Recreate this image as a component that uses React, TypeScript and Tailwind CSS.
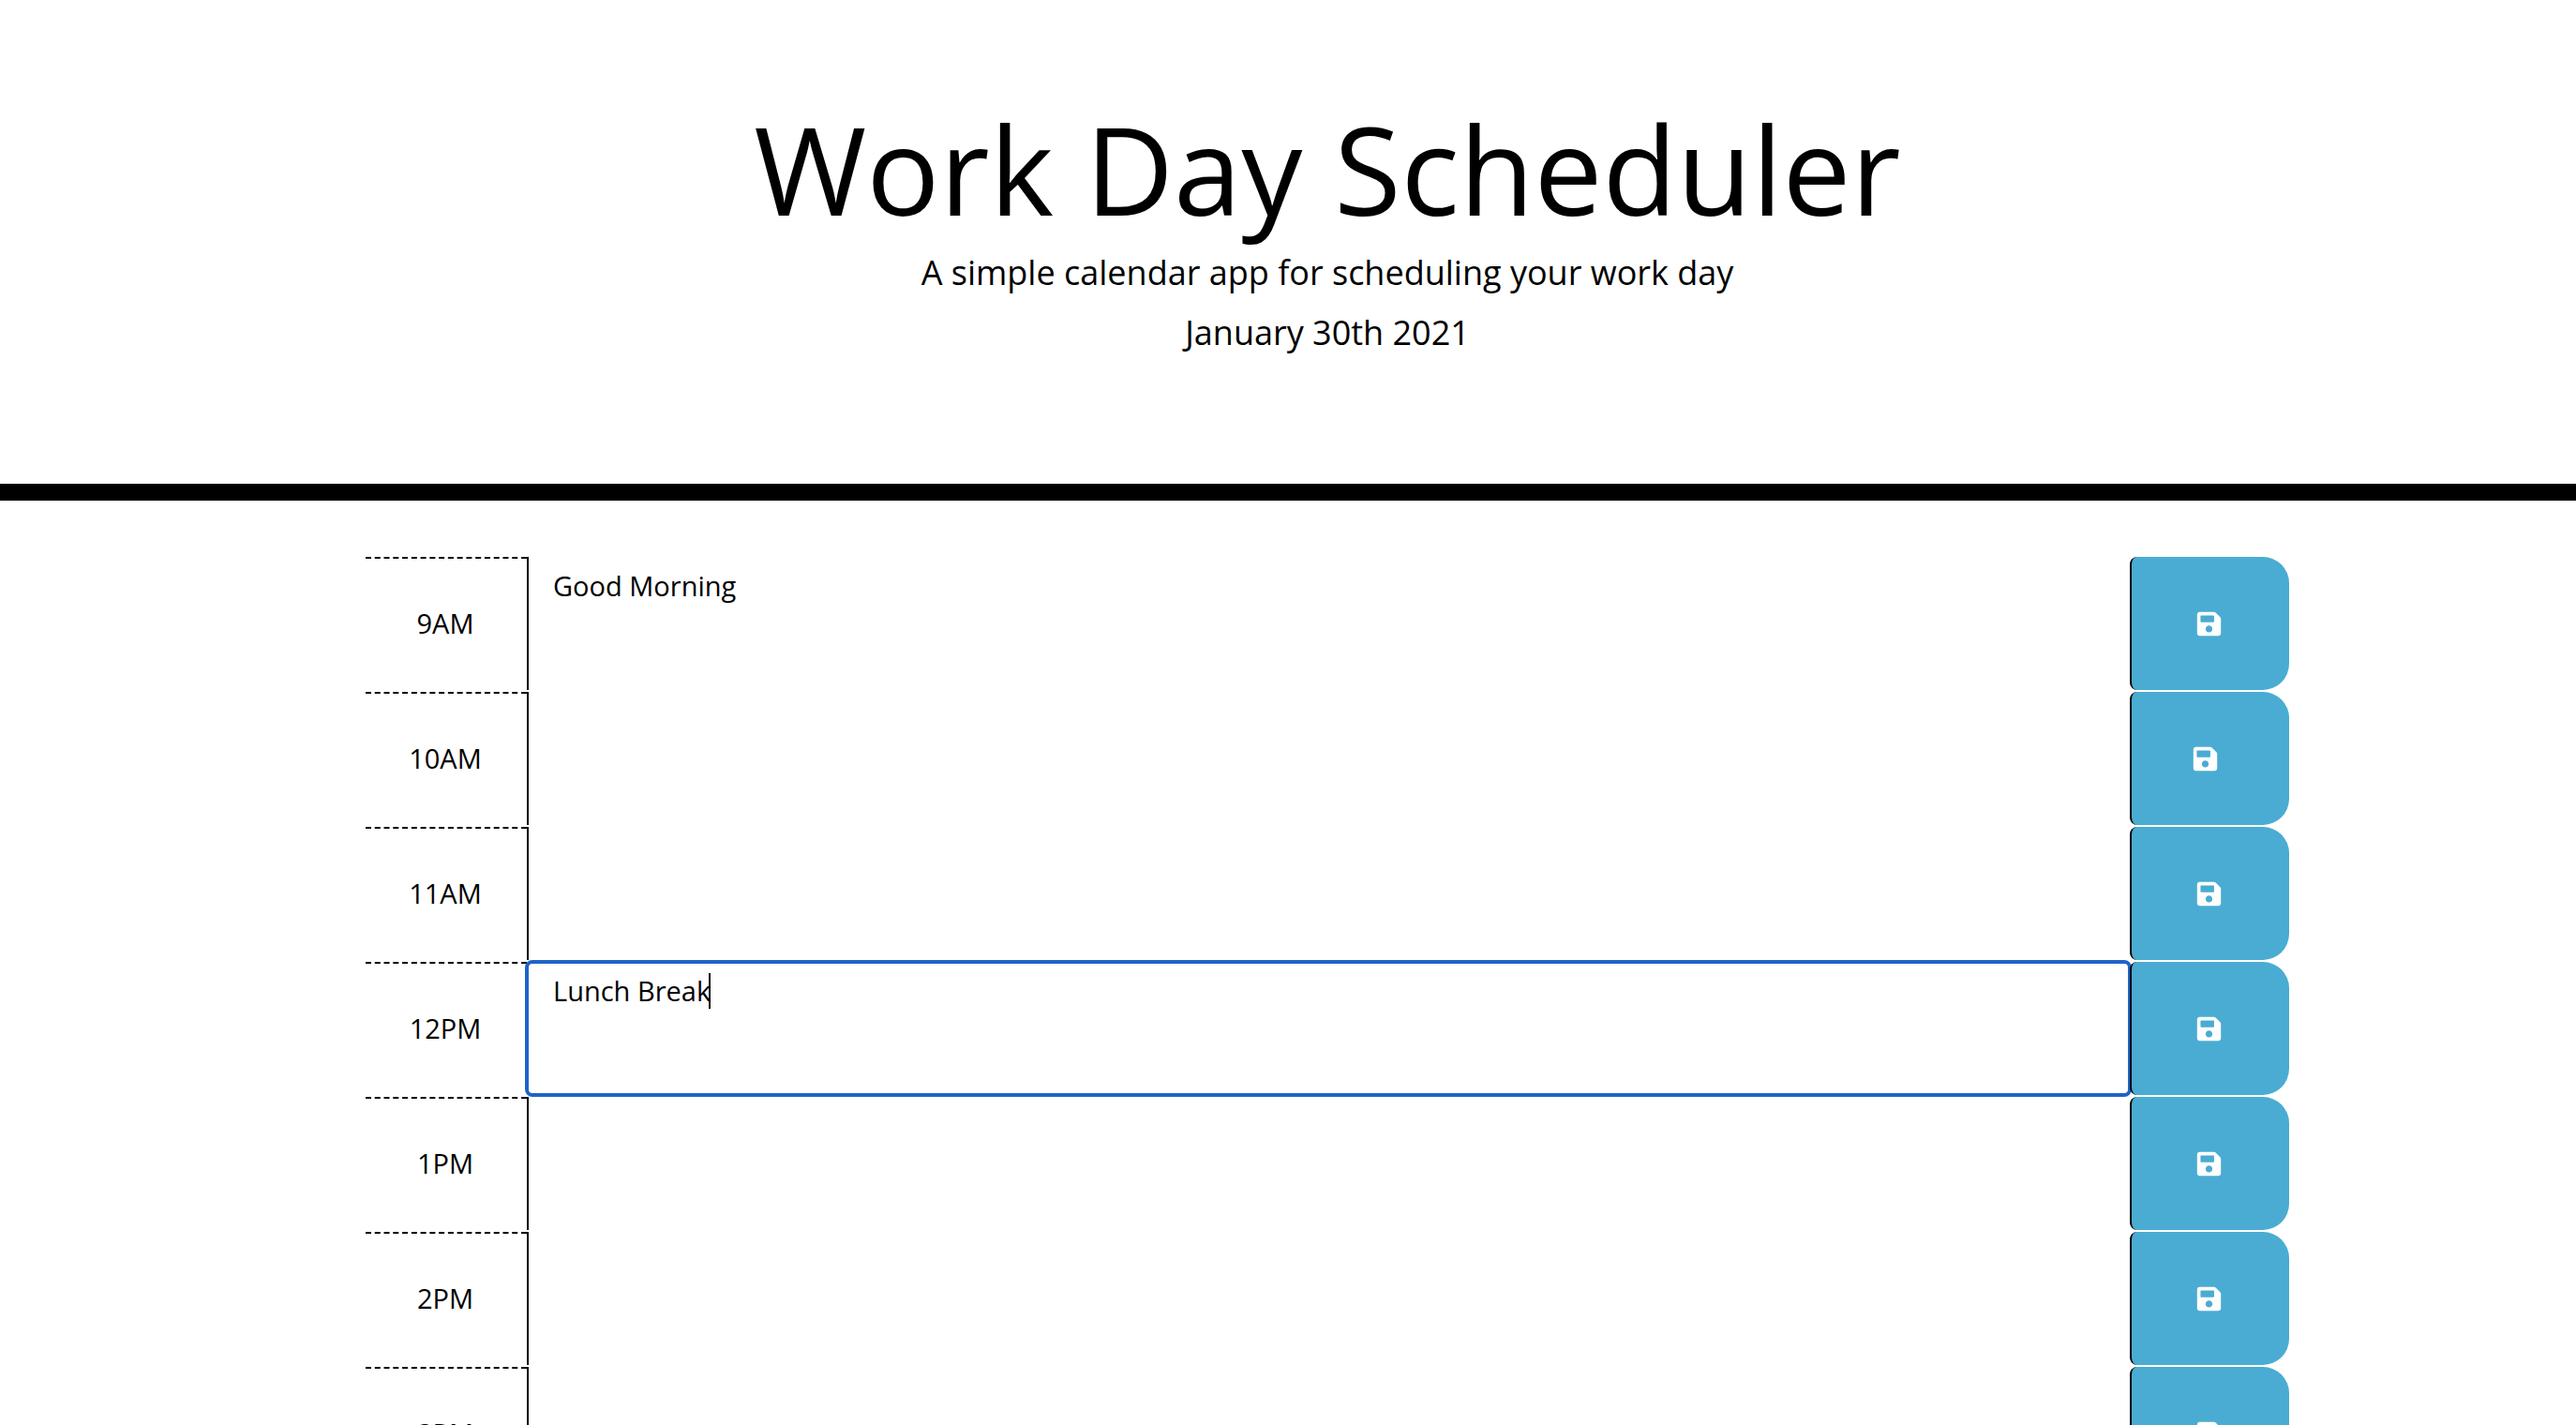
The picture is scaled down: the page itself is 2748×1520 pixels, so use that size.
import { useState } from "react";
import { FaSave } from "react-icons/fa";

type Slot = { hour: string; note: string; focused?: boolean; nudged?: boolean };

const slots: Slot[] = [
  { hour: "9AM", note: "Good Morning" },
  { hour: "10AM", note: "", nudged: true },
  { hour: "11AM", note: "" },
  { hour: "12PM", note: "Lunch Break", focused: true },
  { hour: "1PM", note: "" },
  { hour: "2PM", note: "" },
  { hour: "3PM", note: "" },
];

function TimeBlock({ slot }: { slot: Slot }) {
  const [note, setNote] = useState(slot.note);
  const id = `note-${slot.hour}`;
  return (
    <li className="mb-0.5 grid h-[142px] grid-cols-[172px_1fr_170px]">
      <label
        htmlFor={id}
        className="flex items-center justify-center border-t-2 border-dashed border-black pr-0.5 pb-0.5"
      >
        {slot.hour}
      </label>
      <div className="relative flex">
        <textarea
          id={id}
          value={note}
          onChange={(e) => setNote(e.target.value)}
          className={
            slot.focused
              ? "w-full resize-none rounded-md px-7 py-3 leading-[38px] outline-4 -outline-offset-2 outline-[#1f62c9]"
              : "w-full resize-none border-l-2 border-black px-6.5 py-3 leading-[38px] outline-[#1f62c9] focus:outline-4 focus:-outline-offset-2"
          }
        />
        {slot.focused && (
          <span className="absolute left-[194px] top-3 h-[38px] w-0.5 bg-black" />
        )}
      </div>
      <button
        type="button"
        aria-label={`Save ${slot.hour}`}
        className={
          slot.nudged
            ? "relative flex items-center justify-center rounded-l-lg rounded-r-[28px] border-l-2 border-black bg-[#4aacd2] pr-3 text-white"
            : "relative flex items-center justify-center rounded-l-lg rounded-r-[28px] border-l-2 border-black bg-[#4aacd2] pr-1 text-white"
        }
      >
        <FaSave className="size-[29px]" />
      </button>
    </li>
  );
}

export default function App() {
  return (
    <div className="h-screen overflow-hidden bg-white font-['Open_Sans',sans-serif] text-[29px] text-black">
      <header className="border-b-[18px] border-black pt-[102px] pb-[137px] pl-[84px] text-center">
        <h1 className="text-[130px] leading-[156px]">Work Day Scheduler</h1>
        <p className="mt-[9px] text-[36px] leading-[48px]">
          A simple calendar app for scheduling your work day
        </p>
        <p className="mt-4 text-[36px] leading-[48px]">January 30th 2021</p>
      </header>
      <main className="pt-[60px] pl-[84px]">
        <ul className="mx-auto w-full max-w-[2052px]">
          {slots.map((slot) => (
            <TimeBlock key={slot.hour} slot={slot} />
          ))}
        </ul>
      </main>
    </div>
  );
}
